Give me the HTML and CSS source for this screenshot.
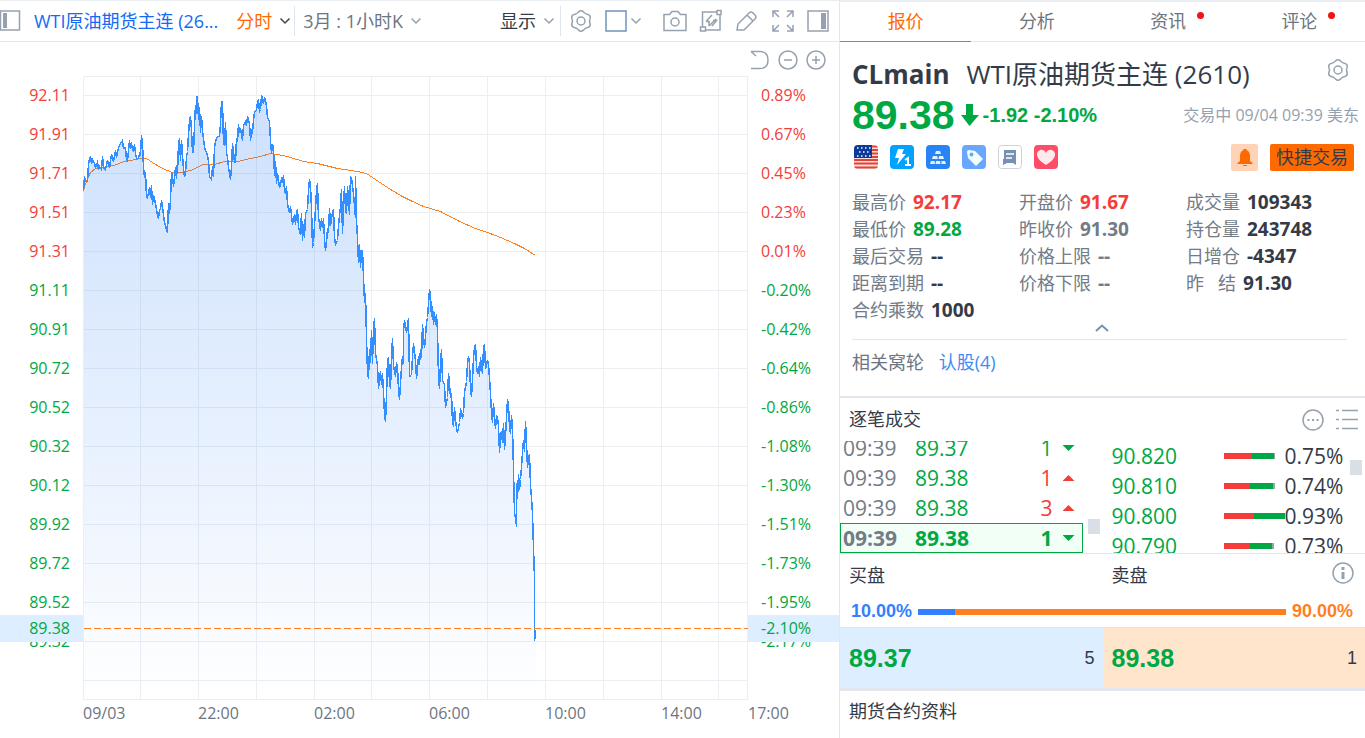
FILE: index.html
```html
<!DOCTYPE html>
<html lang="zh-CN">
<head>
  <meta charset="UTF-8">
  <title>WTI原油期货主连 (2610)</title>
  <link rel="stylesheet" href="styles.css">
</head>
<body>

  <svg class="defs" width="0" height="0">
    <symbol id="gear" viewBox="0 0 24 24">
      <path d="M9.6 2.9Q12 .6 14.4 2.9Q16 5 18.7 5.4Q21.9 6.3 21.1 9.5Q20 12 21.1 14.5Q21.9 17.7 18.7 18.6Q16 19 14.4 21.1Q12 23.4 9.6 21.1Q8 19 5.3 18.6Q2.1 17.7 2.9 14.5Q4 12 2.9 9.5Q2.1 6.3 5.3 5.4Q8 5 9.6 2.9Z"/>
      <circle cx="12" cy="12" r="4"/>
    </symbol>
    <symbol id="down" viewBox="0 0 12 8"><path d="M1.500 1.500L6 6L10.500 1.500"/></symbol>
  </svg>

  <main class="chart-side">
    <div class="toolbar">
      <button class="icon" aria-label="左侧栏">
        <svg width="22" height="22"><rect x="0.5" y="1" width="19" height="19"/><rect class="solid" x="3" y="3" width="4" height="15"/></svg>
      </button>
      <a class="name" href="#">WTI原油期货主连 (26...</a>
      <label class="drop orange">
        <select aria-label="图表类型"><option>分时</option><option>日K</option></select>
        <svg class="dark" width="12" height="8"><use href="#down"/></svg>
      </label>
      <label class="drop period">
        <select aria-label="周期"><option>3月 : 1小时K</option><option>1年 : 日K</option></select>
        <svg width="12" height="8"><use href="#down"/></svg>
      </label>
      <button class="drop show">显示 <svg width="12" height="8"><use href="#down"/></svg></button>
      <div class="tools">
        <button class="icon" aria-label="设置"><svg width="24" height="24"><use href="#gear"/></svg></button>
        <button class="icon window" aria-label="多图">
          <svg class="blue" width="22" height="22"><rect x="1" y="1" width="20" height="20"/></svg>
          <svg width="12" height="8"><use href="#down"/></svg>
        </button>
        <button class="icon" aria-label="截图">
          <svg width="24" height="22"><path d="M1 4.500H6.500L9 1.500H15L17.500 4.500H23V20.500H1Z"/><circle cx="12" cy="12" r="4"/></svg>
        </button>
        <button class="icon" aria-label="区间统计">
          <svg width="24" height="24"><path d="M3.500 18V3H18M21 6V21H7"/><rect x="1.500" y="18" width="5" height="4"/><rect x="18" y="1.500" width="4" height="4"/><path d="M7 12.500H11M7 12.500L13 6M10 17L17 10M13 17L17.500 11.500H14M10 17V13"/></svg>
        </button>
        <button class="icon" aria-label="画线">
          <svg width="24" height="24"><path d="M2 21L3 15L14 4Q16 2 18 4L20 6Q22 8 20 10L9 21ZM12 6L18 12"/></svg>
        </button>
        <button class="icon" aria-label="全屏">
          <svg width="24" height="24"><path d="M2 8V2H8M2 2L8 8M16 2H22V8M22 2L16 8M2 16V22H8M2 22L8 16M16 22H22V16M22 22L16 16"/></svg>
        </button>
        <button class="icon" aria-label="右侧栏">
          <svg width="22" height="22"><rect x="1" y="1" width="20" height="20"/><rect class="solid" x="14" y="3" width="5" height="16"/></svg>
        </button>
      </div>
    </div>

    <div class="zoom-row">
      <button class="icon" aria-label="还原"><svg width="20" height="20"><path d="M1 1.500H10Q18 1.500 18 10Q18 18.500 10 18.500H1M1 1.500L6 6"/></svg></button>
      <button class="icon" aria-label="缩小"><svg width="20" height="20"><circle cx="10" cy="10" r="9"/><path d="M6 10H14"/></svg></button>
      <button class="icon" aria-label="放大"><svg width="20" height="20"><circle cx="10" cy="10" r="9"/><path d="M6 10H14M10 6V14"/></svg></button>
    </div>

    <div class="chart">
      <div class="axis price">
        <span class="up">92.11</span><span class="up">91.91</span><span class="up">91.71</span><span class="up">91.51</span><span class="up">91.31</span>
        <span>91.11</span><span>90.91</span><span>90.72</span><span>90.52</span><span>90.32</span><span>90.12</span><span>89.92</span><span>89.72</span><span>89.52</span><span>89.32</span>
        <b class="tag">89.38</b>
      </div>

      <svg class="plot" viewBox="83 76 665 624" preserveAspectRatio="none">
        <defs>
          <linearGradient id="fade" gradientUnits="userSpaceOnUse" x1="0" y1="95" x2="0" y2="699">
            <stop offset="0" stop-color="#2f80f8" stop-opacity=".24"/>
            <stop offset=".5" stop-color="#2f80f8" stop-opacity=".13"/>
            <stop offset="1" stop-color="#2f80f8" stop-opacity="0"/>
          </linearGradient>
        </defs>
        <g transform="translate(.5 .5)">
          <path class="grid" d="M83 76H747M83 95H747M83 134H747M83 173H747M83 212H747M83 251H747M83 290H747M83 329H747M83 368H747M83 407H747M83 446H747M83 485H747M83 524H747M83 563H747M83 602H747M83 641H747M83 680H747M83 699H747
            M83 76V699M140 76V699M198 76V699M256 76V699M314 76V699M371 76V699M429 76V699M487 76V699M545 76V699M603 76V699M661 76V699M718 76V699M747 76V699"/>
          <path class="avg" d="M83 190L84 186L86 181L90 172L95 168L104 167L113 165L124 161L135 159L141 158L146 158L152 162L160 167L167 170L172 172L180 172L190 170L197 167L202 164L214 164L224 161L237 161L250 158L260 156L270 153L276 154L283 155L290 157L303 161L317 163L337 168L357 171L366 173L372 177L387 187L400 195L410 200L423 206L440 211L459 221L475 228L487 232L500 237L514 243L524 248L535 255"/>
          <path class="area" id="area"/>
          <polyline class="line" id="line" points="83,191 84,176 85,181 87,181 88,163 89,159 90,156 91,163 92,159 94,163 95,167 97,162 98,169 99,166 101,169 102,156 103,167 105,169 107,160 109,167 110,160 111,154 113,161 115,150 116,157 118,147 120,143 122,140 123,148 125,147 126,159 127,160 129,140 130,148 131,144 133,151 134,144 135,153 136,158 138,158 139,153 140,154 141,135 142,143 143,167 144,177 145,172 146,196 147,197 149,187 150,197 151,185 152,204 153,195 155,203 157,215 158,218 159,209 160,209 161,200 163,214 164,223 165,224 166,230 167,231 168,203 169,213 170,199 171,172 172,176 173,186 174,176 175,167 176,178 177,160 177,173 178,144 179,138 180,160 181,140 182,155 183,169 184,176 185,173 186,156 187,151 188,134 189,120 190,116 191,130 192,152 193,152 194,125 195,105 196,113 196,96 197,96 198,119 199,107 200,132 201,116 202,130 204,147 207,155 208,161 209,176 211,179 212,166 213,176 214,147 215,141 217,136 219,136 220,123 221,101 222,101 223,143 224,144 225,122 226,152 227,157 228,167 230,179 231,167 232,143 233,151 234,162 235,162 236,138 237,141 238,124 239,132 240,128 242,140 243,125 245,121 246,125 247,116 249,123 250,140 251,130 252,132 253,120 254,112 256,109 257,102 258,99 259,111 260,109 261,95 263,103 264,97 266,105 267,117 269,121 270,140 271,153 272,144 273,147 274,175 275,161 276,183 277,173 279,187 281,179 282,182 283,175 284,190 285,193 286,186 287,204 289,212 290,206 292,224 294,214 295,224 296,212 297,209 298,227 300,234 301,213 302,240 303,224 304,237 305,213 307,209 308,190 309,179 310,186 311,207 312,247 313,242 315,208 316,190 317,183 318,217 320,230 321,218 322,227 323,218 324,238 325,250 326,242 327,228 328,232 329,208 330,225 332,212 333,209 334,237 335,244 337,240 338,225 340,206 341,189 342,233 343,205 344,186 345,209 346,213 347,186 349,214 350,176 351,178 353,193 354,206 355,217 355,176 356,220 357,238 358,262 359,244 360,267 361,250 362,250 363,277 364,302 365,293 366,337 367,371 368,378 369,349 370,362 371,330 372,363 373,328 374,318 375,353 377,365 378,388 380,371 381,384 382,373 383,392 384,414 385,421 386,396 387,359 388,357 389,383 390,388 391,356 392,338 393,365 395,376 396,362 397,367 398,388 399,399 401,367 402,356 403,363 403,330 404,320 406,332 408,318 409,376 411,375 412,356 413,343 415,360 416,378 418,356 419,364 420,349 421,357 422,324 424,347 425,336 426,322 427,317 428,303 429,289 430,295 431,316 432,306 433,324 434,312 435,324 436,314 437,330 438,377 439,388 440,363 441,349 442,380 444,384 445,407 447,397 448,373 449,384 450,397 451,393 452,423 453,425 454,407 455,419 456,428 457,432 459,422 460,409 461,411 462,418 463,413 464,392 466,381 467,364 468,356 469,363 470,388 471,396 472,379 473,357 474,347 475,344 476,366 477,373 478,366 479,376 480,357 482,373 483,347 484,344 485,368 487,360 488,364 489,378 490,393 491,412 492,422 493,403 495,428 496,416 497,417 498,425 499,452 500,435 501,431 502,442 503,423 504,449 505,436 506,417 507,399 508,405 509,427 510,433 511,415 512,427 513,470 514,513 515,517 516,526 516,483 517,498 518,474 519,489 520,479 521,466 522,452 523,440 524,451 525,421 526,443 527,467 528,458 529,454 530,485 531,498 532,513 533,548 534,578 534,640 535,635 535,629"/>
          <path class="last" d="M83 628H747"/>
        </g>
      </svg>

      <div class="axis percent">
        <span class="up">0.89%</span><span class="up">0.67%</span><span class="up">0.45%</span><span class="up">0.23%</span><span class="up">0.01%</span>
        <span>-0.20%</span><span>-0.42%</span><span>-0.64%</span><span>-0.86%</span><span>-1.08%</span><span>-1.30%</span><span>-1.51%</span><span>-1.73%</span><span>-1.95%</span><span>-2.17%</span>
        <b class="tag">-2.10%</b>
      </div>
    </div>

    <div class="times">
      <span>09/03</span><span>22:00</span><span>02:00</span><span>06:00</span><span>10:00</span><span>14:00</span><span>17:00</span>
    </div>
  </main>

  <aside class="quote-side">
    <nav class="tabs">
      <a class="active" href="#">报价</a>
      <a href="#">分析</a>
      <a class="new" href="#">资讯</a>
      <a class="new" href="#">评论</a>
    </nav>

    <section class="summary">
      <div class="title">
        <h1>CLmain</h1>
        <h2>WTI原油期货主连 (2610)</h2>
        <button class="icon" aria-label="设置"><svg width="24" height="24"><use href="#gear"/></svg></button>
      </div>

      <div class="now">
        <strong>89.38</strong>
        <svg width="18" height="22"><path d="M5 0H12V11H18L8.500 22L0 11H5Z" fill="#00a843"/></svg>
        <span class="change">-1.92 -2.10%</span>
        <span class="status">交易中 09/04 09:39 美东</span>
      </div>

      <div class="badges">
        <svg width="24" height="24"><clipPath id="flag"><rect width="24" height="24" rx="4"/></clipPath>
          <g clip-path="url(#flag)"><rect width="24" height="24" fill="#fbdedb"/>
            <path d="M18 1.500H24M18 5H24M18 8.500H24M18 12H24M0 15H24M0 18.500H24M0 22.500H24" stroke="#e04438" stroke-width="2"/>
            <rect width="18" height="13" fill="#0b3a99"/>
            <path d="M3 3H17M5 7H17M3 11H17" stroke="#fff" stroke-width="1.500" stroke-dasharray="1.500 2.500"/></g></svg>
        <svg width="24" height="24"><rect width="24" height="24" rx="4" fill="#00a2ff"/><path d="M8 4H14L12 9H16L7 20L9 13H5Z" fill="#fff"/><path d="M15 15L18 13V20M15 20H21" stroke="#fff" stroke-width="2" fill="none"/></svg>
        <svg width="24" height="24"><rect width="24" height="24" rx="4" fill="#2884f5"/><path d="M10 6H14L15 9H9ZM7 11H11L12 14H6ZM13 11H17L18 14H12.600ZM5 16H8.500L9 19H4ZM10 16H14L14.500 19H9.500ZM15.500 16H19L20 19H15.500Z" fill="#e4f2ff"/></svg>
        <svg width="24" height="24"><rect width="24" height="24" rx="4" fill="#69a7ff"/><path d="M5 7Q5 5 7 5L13 6L21 14L14 21L6 13ZM9.500 7.500A2 2 0 1 0 9.500 11.500A2 2 0 1 0 9.500 7.500Z" fill="#f0fffb" fill-rule="evenodd"/></svg>
        <svg width="24" height="24"><rect x=".5" y=".5" width="23" height="23" rx="3" fill="#fff" stroke="#ccd4dd"/><path d="M6 5H18V20L15 18H9L5 20V14H6Z" fill="#7791b3"/><path d="M8 9H16M8 13H14" stroke="#fff" stroke-width="1.500"/></svg>
        <svg width="24" height="24"><rect width="24" height="24" rx="4" fill="#ff4d68"/><path d="M12 20C2 14 2 9 4 6.500C7 3.500 10.500 5 12 8C13.500 5 17 3.500 20 6.500C22 9 22 14 12 20Z" fill="#ffe9ed"/></svg>
        <button class="bell" aria-label="提醒">
          <svg width="16" height="18"><path d="M6.500 1H9.500V2Q13 3.500 13 8V13L15.500 15V16H.5V15L3 13V8Q3 3.500 6.500 2ZM6 17H10V18H6Z" fill="#ff6a00"/></svg>
        </button>
        <button class="trade">快捷交易</button>
      </div>

      <dl class="stats">
        <div><dt>最高价</dt><dd class="up">92.17</dd></div>
        <div><dt>开盘价</dt><dd class="up">91.67</dd></div>
        <div><dt>成交量</dt><dd>109343</dd></div>
        <div><dt>最低价</dt><dd class="down">89.28</dd></div>
        <div><dt>昨收价</dt><dd class="flat">91.30</dd></div>
        <div><dt>持仓量</dt><dd>243748</dd></div>
        <div><dt>最后交易</dt><dd>--</dd></div>
        <div><dt>价格上限</dt><dd class="flat">--</dd></div>
        <div><dt>日增仓</dt><dd>-4347</dd></div>
        <div><dt>距离到期</dt><dd>--</dd></div>
        <div><dt>价格下限</dt><dd class="flat">--</dd></div>
        <div><dt>昨   结</dt><dd>91.30</dd></div>
        <div><dt>合约乘数</dt><dd>1000</dd></div>
      </dl>
      <button class="fold" aria-label="收起"><svg width="14" height="8"><path d="M1 7L7 1.500L13 7"/></svg></button>
      <p class="related">相关窝轮 <a href="#">认股(4)</a></p>
    </section>

    <section class="ticks">
      <header>
        <h3>逐笔成交</h3>
        <button class="icon" aria-label="更多"><svg width="22" height="22"><circle cx="11" cy="11" r="10"/><path d="M5.500 11H7.500M10 11H12M14.500 11H16.500" stroke-width="2"/></svg></button>
        <button class="icon" aria-label="列表"><svg width="22" height="22"><path d="M0 1.500H3M6 1.500H22M0 10.500H3M6 10.500H22M0 19.500H3M6 19.500H22"/></svg></button>
      </header>
      <div class="lists">
        <div class="deals">
          <table>
            <tr><td>09:39</td><td class="down">89.37</td><td class="down">1</td><td><i class="tri"></i></td></tr>
            <tr><td>09:39</td><td class="down">89.38</td><td class="up">1</td><td><i class="tri rise"></i></td></tr>
            <tr><td>09:39</td><td class="down">89.38</td><td class="up">3</td><td><i class="tri rise"></i></td></tr>
            <tr class="latest"><td>09:39</td><td class="down">89.38</td><td class="down">1</td><td><i class="tri"></i></td></tr>
          </table>
          <i class="thumb"></i>
        </div>
        <div class="levels">
          <table>
            <tr><td>90.820</td><td><div class="bar"><i style="width:28px"></i><i style="width:22px"></i><i style="width:1px"></i></div></td><td>0.75%</td></tr>
            <tr><td>90.810</td><td><div class="bar"><i style="width:26px"></i><i style="width:23px"></i><i style="width:2px"></i></div></td><td>0.74%</td></tr>
            <tr><td>90.800</td><td><div class="bar"><i style="width:30px"></i><i style="width:31px"></i></div></td><td>0.93%</td></tr>
            <tr><td>90.790</td><td><div class="bar"><i style="width:26px"></i><i style="width:22px"></i><i style="width:2px"></i></div></td><td>0.73%</td></tr>
          </table>
          <i class="thumb"></i>
        </div>
      </div>
    </section>

    <section class="book">
      <header>
        <h3>买盘</h3>
        <h3>卖盘</h3>
        <button class="icon" aria-label="说明"><svg width="22" height="22"><circle cx="11" cy="11" r="10"/><path d="M11 5V8M11 10V17" stroke-width="3"/></svg></button>
      </header>
      <div class="ratio">
        <b>10.00%</b>
        <div><i style="width:10%"></i></div>
        <b class="sell">90.00%</b>
      </div>
      <div class="best">
        <div class="bid"><b>89.37</b><span>5</span></div>
        <div class="ask"><b>89.38</b><span>1</span></div>
      </div>
    </section>

    <h3 class="contract">期货合约资料</h3>
  </aside>

  <script>
    // fill the area under the price line, down to the bottom of the plot
    const points = document.getElementById("line").getAttribute("points");
    document.getElementById("area").setAttribute("d", "M83,699 L" + points + " L535,699 Z");
  </script>

</body>
</html>
```

FILE: styles.css
```css
* {
  box-sizing: border-box;
}

body {
  display: flex;
  min-height: 100vh;
  margin: 0;
  background: #fff;
  color: #343b47;
  font-family: "Open Sans", "Noto Sans CJK SC", sans-serif;
  font-size: 18px;
  line-height: 27px;
}

h1, h2, h3, p, dl, dd {
  margin: 0;
}

h3, b {
  font-size: 18px;
  font-weight: 400;
}

a {
  color: inherit;
  text-decoration: none;
}

button, select {
  padding: 0;
  border: none;
  background: none;
  color: inherit;
  font: inherit;
  cursor: pointer;
}

select {
  appearance: none;
}

table {
  border-collapse: collapse;
  table-layout: fixed;
}

td {
  padding: 0;
}

.defs {
  position: absolute;
}

.up {
  color: #f43c3a;
}

.down {
  color: #00a843;
}

.flat {
  color: #737b87;
}

/* icons */
.icon {
  display: flex;
  align-items: center;
}

.icon svg, .drop svg, .fold svg {
  display: block;
  fill: none;
  stroke: #96a1af;
  stroke-width: 1.5;
}

.icon .solid {
  fill: #96a1af;
  stroke: none;
}

.icon .blue {
  stroke: #6f94bd;
}

/* chart */
.chart-side {
  flex: 1;
  min-width: 0;
}

.toolbar {
  display: flex;
  align-items: center;
  height: 42px;
  border-top: 1px solid #e9eef3;
  border-bottom: 1px solid #e3e7ed;
}

.name {
  margin-left: 12px;
  color: #1469f5;
  white-space: nowrap;
}

.drop {
  display: flex;
  align-items: center;
  gap: 7px;
  height: 30px;
}

.drop .dark {
  stroke: #3c4450;
}

.orange {
  margin-left: 18px;
  padding-right: 3px;
  border-right: 1px solid #dfe5ee;
  color: #ff6a00;
}

.period {
  margin-left: 8px;
  color: #6d7581;
}

.show {
  margin-left: auto;
  padding-right: 5px;
  border-right: 1px solid #dfe5ee;
}

.tools {
  display: flex;
  gap: 12px;
  margin: 0 10px 0 8px;
}

.tools .window {
  gap: 3px;
  margin-right: 9px;
}

.zoom-row {
  display: flex;
  justify-content: flex-end;
  gap: 8px;
  height: 34px;
  padding: 1px 13px 0 0;
}

.chart {
  display: grid;
  grid-template-columns: 83px 1fr 91px;
}

.plot {
  display: block;
  width: 100%;
  height: 624px;
  fill: none;
  shape-rendering: crispEdges;
}

.grid {
  stroke: #ebeff4;
}

.avg {
  stroke: #ff7f1f;
}

.area {
  fill: url(#fade);
}

.line {
  stroke: #338fff;
  stroke-width: 1.5;
}

.last {
  stroke: #ff7f1f;
  stroke-dasharray: 7 3;
}

.axis {
  position: relative;
  display: flex;
  flex-direction: column;
  color: #00a843;
  font-size: 16px;
  line-height: 39px;
}

.price {
  text-align: right;
}

.price > * {
  padding-right: 13px;
}

.percent > * {
  padding-left: 13px;
}

.tag {
  position: absolute;
  top: 539px;
  left: 0;
  right: 0;
  background: #dceeff;
  font-size: 16px;
  line-height: 27px;
}

.times {
  display: grid;
  grid-template-columns: 115fr 116fr 115fr 116fr 116fr 87fr 91px;
  padding-left: 83px;
  color: #6d7581;
  font-size: 16px;
}

/* quote panel */
.quote-side {
  width: 526px;
  border-left: 1px solid #e3e7ed;
}

.tabs {
  display: grid;
  grid-template-columns: repeat(4, 1fr);
  height: 42px;
  border-top: 2px solid #e9eef3;
  border-bottom: 1px solid #e3e7ed;
  color: #6d7581;
  line-height: 38px;
  text-align: center;
}

.tabs a {
  position: relative;
  height: 40px;
}

.tabs .active {
  border-bottom: 1px solid #ff6a00;
  color: #ff6a00;
}

.tabs .new::after {
  content: "";
  position: absolute;
  top: 10px;
  left: calc(50% + 29px);
  width: 7px;
  height: 7px;
  border-radius: 50%;
  background: #f01414;
}

.summary {
  height: 354px;
  padding: 14px 0 0 12px;
}

.title {
  display: flex;
  align-items: center;
  height: 36px;
  padding-right: 15px;
}

.title h1 {
  font-size: 26px;
}

.title h2 {
  margin-left: 17px;
  font-size: 26px;
  font-weight: 400;
}

.title .icon {
  margin: 0 0 8px auto;
}

.now {
  display: flex;
  align-items: center;
  height: 46px;
  padding-right: 6px;
  color: #00a843;
  font-family: "Liberation Sans", sans-serif;
}

.now strong {
  margin-right: 6px;
  font-size: 41px;
}

.change {
  margin-left: 4px;
  font-size: 20px;
  font-weight: 700;
}

.status {
  margin-left: auto;
  color: #96a1af;
  font-family: "Open Sans", "Noto Sans CJK SC", sans-serif;
  font-size: 16px;
}

.badges {
  display: flex;
  align-items: center;
  gap: 12px;
  height: 38px;
  padding: 0 11px 0 2px;
}

.bell {
  display: flex;
  align-items: center;
  justify-content: center;
  width: 27px;
  height: 27px;
  margin-left: auto;
  border-radius: 2px;
  background: #ffd3b5;
}

.trade {
  width: 84px;
  height: 27px;
  border-radius: 2px;
  background: #ff6a00;
}

.stats {
  display: grid;
  grid-template-columns: repeat(3, 167px);
  margin-top: 13px;
}

.stats div {
  display: flex;
  gap: 7px;
}

.stats dt {
  color: #737b87;
  white-space: pre;
}

.stats dd {
  font-size: 19px;
  font-weight: 700;
}

.fold {
  display: flex;
  justify-content: center;
  width: calc(100% - 18px);
  height: 16px;
  padding-left: 5px;
  border-bottom: 1px solid #e3e7ed;
}

.fold svg {
  stroke: #7791b3;
  stroke-width: 2;
}

.related {
  color: #6d7581;
  line-height: 44px;
}

.related a {
  margin-left: 10px;
  color: #3d8bf5;
}

.ticks {
  border-top: 2px solid #e3e7ed;
  border-bottom: 1px solid #e3e7ed;
}

.ticks header {
  display: flex;
  align-items: center;
  gap: 12px;
  height: 43px;
  padding: 0 7px 0 9px;
}

.ticks h3 {
  margin-right: auto;
}

.lists {
  display: grid;
  grid-template-columns: 1fr 1fr;
  grid-template-rows: 100%;
  height: 112px;
  overflow: hidden;
  font-size: 21px;
}

.lists tr {
  height: 30px;
}

.deals, .levels {
  position: relative;
  display: flex;
  flex-direction: column;
}

/* the newest deal stays in sight at the bottom */
.deals {
  justify-content: flex-end;
  padding-right: 20px;
}

.deals td:nth-child(1) {
  width: 75px;
  padding-left: 3px;
  color: #737b87;
}

.deals td:nth-child(3) {
  text-align: right;
}

.deals td:nth-child(4) {
  width: 30px;
  padding-left: 10px;
}

.latest {
  background: #f1fff6;
  font-weight: 700;
  outline: 1px solid #00a843;
  outline-offset: -1px;
}

.tri {
  display: block;
  width: 12px;
  height: 6px;
  background: #00a843;
  clip-path: polygon(0 0, 100% 0, 50% 100%);
}

.rise {
  background: #f43c3a;
  clip-path: polygon(0 100%, 100% 100%, 50% 0);
}

.levels td:nth-child(1) {
  width: 121px;
  padding-left: 9px;
  color: #00a843;
}

.levels td:nth-child(2) {
  width: 61px;
}

.bar {
  display: flex;
  height: 6px;
}

.bar i:nth-child(1) {
  background: #f43c3a;
}

.bar i:nth-child(2) {
  background: #00a843;
}

.bar i:nth-child(3) {
  background: #9aa4b1;
}

.thumb {
  position: absolute;
  top: 78px;
  right: 3px;
  width: 12px;
  height: 15px;
  background: #d8dfe7;
}

.levels .thumb {
  top: 19px;
}

.book header {
  position: relative;
  display: grid;
  grid-template-columns: 1fr 1fr;
  align-items: center;
  height: 42px;
}

.book h3 {
  padding-left: 9px;
}

.book .icon {
  position: absolute;
  top: 8px;
  right: 11px;
}

.ratio {
  display: flex;
  align-items: center;
  gap: 6px;
  height: 31px;
  padding: 0 12px 0 11px;
  color: #327fff;
  font-family: "Liberation Sans", sans-serif;
}

.ratio b {
  font-weight: 700;
}

.ratio .sell {
  color: #ff7f1f;
}

.ratio div {
  flex: 1;
  height: 6px;
  background: #ff7f1f;
}

.ratio i {
  display: block;
  height: 6px;
  background: #327fff;
}

.best {
  display: grid;
  grid-template-columns: 1fr 1fr;
  border-top: 1px solid #e3e7ed;
  border-bottom: 3px solid #e3e7ed;
  font-family: "Liberation Sans", sans-serif;
}

.best div {
  display: flex;
  align-items: center;
  justify-content: space-between;
  height: 60px;
  padding: 0 8px 0 9px;
}

.best b {
  color: #00a843;
  font-size: 25px;
  font-weight: 700;
}

.bid {
  background: #dceeff;
}

.ask {
  background: #ffe5cc;
}

.contract {
  padding-left: 9px;
  line-height: 40px;
}
```
